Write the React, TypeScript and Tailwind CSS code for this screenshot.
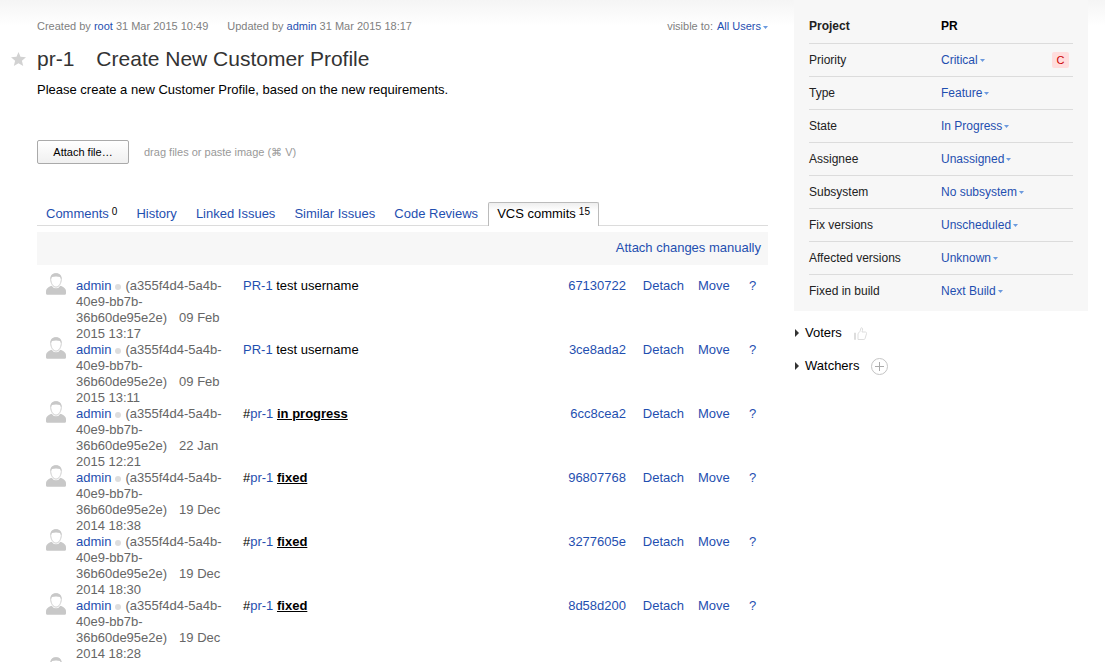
import type { ReactNode } from 'react'

type Commit = {
  date: string
  time: string
  hash: string
  message: ReactNode
}

function IssueLink({ children }: { children: ReactNode }) {
  return <a href="#" className="text-[#1f4fb0]">{children}</a>
}

const testMessage = <><IssueLink>PR-1</IssueLink> test username</>

const command = (text: string) => (
  <>#<IssueLink>pr-1</IssueLink> <b className="underline">{text}</b></>
)

const commits: Commit[] = [
  { date: '09 Feb', time: '2015 13:17', hash: '67130722', message: testMessage },
  { date: '09 Feb', time: '2015 13:11', hash: '3ce8ada2', message: testMessage },
  { date: '22 Jan', time: '2015 12:21', hash: '6cc8cea2', message: command('in progress') },
  { date: '19 Dec', time: '2014 18:38', hash: '96807768', message: command('fixed') },
  { date: '19 Dec', time: '2014 18:30', hash: '3277605e', message: command('fixed') },
  { date: '19 Dec', time: '2014 18:28', hash: '8d58d200', message: command('fixed') },
]

const tabs = [
  { label: 'Comments', count: 0 },
  { label: 'History' },
  { label: 'Linked Issues' },
  { label: 'Similar Issues' },
  { label: 'Code Reviews' },
  { label: 'VCS commits', count: 15, active: true },
]

const fields = [
  { name: 'Priority', value: 'Critical', badge: 'C' },
  { name: 'Type', value: 'Feature' },
  { name: 'State', value: 'In Progress' },
  { name: 'Assignee', value: 'Unassigned' },
  { name: 'Subsystem', value: 'No subsystem' },
  { name: 'Fix versions', value: 'Unscheduled' },
  { name: 'Affected versions', value: 'Unknown' },
  { name: 'Fixed in build', value: 'Next Build' },
]

function Dropdown({ children }: { children: ReactNode }) {
  return (
    <button type="button" className="inline-flex items-center gap-0.5 text-[#1f4fb0]">
      {children}
      <svg width="5" height="3" viewBox="0 0 5 3" fill="#6c9ade" className="mt-0.5">
        <path d="M0 0h5L2.5 3z" />
      </svg>
    </button>
  )
}

function Avatar() {
  return (
    <svg width="20" height="22" viewBox="0 0 20 22">
      <path d="M0 18.500C0 15.200 3 13.500 6 12.800h8c3 .7 6 2.400 6 5.700v1.700c0 1-.7 1.600-1.800 1.600H1.800C.7 21.800 0 21.200 0 20.200z" fill="#c8c8c8" />
      <path d="M10 .8c3.600 0 5.500 2.400 5.300 5.600C15.100 10.400 13 14.300 10 14.300S4.900 10.400 4.700 6.400C4.500 3.200 6.400.8 10 .8z" fill="#fff" stroke="#fff" strokeWidth="2" />
      <path d="M10 .8c3.600 0 5.500 2.400 5.300 5.600C15.100 10.400 13 14.100 10 14.100S4.900 10.400 4.700 6.400C4.500 3.200 6.400.8 10 .8z" fill="#fff" stroke="#c8c8c8" strokeWidth="0.9" />
      <path d="M4.700 6.200C4.100 2.500 6.200.3 10 .3s5.900 2.200 5.300 5.900c-.5-.6-.8-1.200-1.200-2.200-2.400-.7-5.800-.7-8.200 0-.4 1-.7 1.600-1.200 2.200z" fill="#c8c8c8" />
    </svg>
  )
}

function FieldsPanel() {
  return (
    <div className="bg-[#f7f7f7] px-[15px] pt-[10px] pb-1">
      <table className="w-full table-fixed border-collapse text-left text-xs">
        <tbody>
          <tr className="h-[33px] border-b border-[#dcdcdc]">
            <th scope="row" className="w-1/2 font-bold text-[#222]">Project</th>
            <td className="w-1/2 font-bold">PR</td>
          </tr>
          {fields.map((field) => (
            <tr key={field.name} className="h-[33px] border-b border-[#dcdcdc] last:border-b-0">
              <th scope="row" className="font-normal text-[#222]">{field.name}</th>
              <td>
                <div className="flex items-center justify-between pr-1">
                  <Dropdown>{field.value}</Dropdown>
                  {field.badge && (
                    <span className="w-[17px] rounded-xs bg-[#ffdddd] text-center text-[11px] leading-4 text-[#c00]">
                      {field.badge}
                    </span>
                  )}
                </div>
              </td>
            </tr>
          ))}
        </tbody>
      </table>
    </div>
  )
}

function Expander({ label }: { label: string }) {
  return (
    <button type="button" className="flex items-center gap-1.5">
      <svg width="5" height="8" viewBox="0 0 5 8" fill="#333">
        <path d="M1 0l4 4-4 4z" />
      </svg>
      {label}
    </button>
  )
}

function App() {
  return (
    <div className="h-screen overflow-hidden bg-white bg-linear-to-b from-[#f5f5f5] to-white to-[26px] font-['Liberation_Sans',Arial,sans-serif] text-[13px] leading-4 text-black">
      <div className="flex items-start gap-[26px] pr-[17px] pl-[11px]">
        <main className="min-w-0 flex-1 pt-[18px]">
          {/* Issue header */}
          <div className="flex items-center justify-between pl-[26px] text-[11px] text-[#808080]">
            <div className="flex gap-[19px]">
              <span>Created by <a href="#" className="text-[#1f4fb0]">root</a> 31 Mar 2015 10:49</span>
              <span>Updated by <a href="#" className="text-[#1f4fb0]">admin</a> 31 Mar 2015 18:17</span>
            </div>
            <div className="flex gap-1">
              visible to: <Dropdown>All Users</Dropdown>
            </div>
          </div>

          <div className="mt-[11px] flex items-center text-[21px] leading-7 text-[#333]">
            <button type="button" aria-label="Star issue" className="w-[26px]">
              <svg width="15" height="14" viewBox="0 0 15 14" fill="#d2d2d2">
                <path d="M7.500 0l2 4.700 5.500.5-4.100 3.500L12.200 14l-4.700-2.800L2.800 14l1.300-5.300L0 5.200l5.500-.5z" />
              </svg>
            </button>
            <h1 className="flex gap-[22px]">
              <span>pr-1</span>
              <span>Create New Customer Profile</span>
            </h1>
          </div>

          <div className="pl-[26px]">
            <p className="mt-[9px]">Please create a new Customer Profile, based on the new requirements.</p>

            <div className="mt-[42px] flex items-center gap-[15px] text-[11px]">
              <button type="button" className="h-6 w-[92px] rounded-xs border border-[#aaa] bg-linear-to-b from-white to-[#f0f0f0]">
                Attach file…
              </button>
              <span className="text-[#999]">drag files or paste image (⌘ V)</span>
            </div>

            {/* Tabs */}
            <nav className="mt-[38px] flex gap-px border-b border-[#dcdcdc]">
              {tabs.map((tab) => (
                <a
                  key={tab.label}
                  href="#"
                  className={
                    tab.active
                      ? '-mb-px flex h-6 gap-[3px] rounded-t-xs border border-b-0 border-[#bbb] bg-white bg-linear-to-b from-[#eee] to-white to-[8px] px-2 pt-[3px]'
                      : 'flex gap-[3px] px-[9px] pt-1 text-[#1f4fb0]'
                  }
                >
                  {tab.label}
                  {tab.count !== undefined && (
                    <span className="text-[10px] leading-3 text-black">{tab.count}</span>
                  )}
                </a>
              ))}
            </nav>

            {/* Commits */}
            <div className="mt-1.5 bg-[#f7f7f7] px-[7px] pt-2 pb-[9px] text-right">
              <a href="#" className="text-[#1f4fb0]">Attach changes manually</a>
            </div>

            <table className="mt-[13px] w-full table-fixed border-collapse">
              <colgroup>
                <col className="w-[39px]" />
                <col className="w-[167px]" />
                <col />
                <col className="w-[100px]" />
                <col className="w-[72px]" />
                <col className="w-[51px]" />
                <col className="w-[19px]" />
              </colgroup>
              <tbody>
                {commits.map((commit) => (
                  <tr key={commit.hash} className="align-top">
                    <td className="pl-[9px]">
                      <div className="-mt-[5px]"><Avatar /></div>
                    </td>
                    <td className="pr-[17px] text-[#666]">
                      <a href="#" className="text-[#1f4fb0]">admin</a>
                      <span className="mx-1 inline-block size-1.5 rounded-full bg-[#ddd]" />
                      (a355f4d4-5a4b-<wbr />40e9-bb7b-<wbr />36b60de95e2e)
                      <span className="ml-3">{commit.date}</span> {commit.time}
                    </td>
                    <td>{commit.message}</td>
                    <td className="text-right"><a href="#" className="text-[#1f4fb0]">{commit.hash}</a></td>
                    <td className="pr-[14px] text-right"><a href="#" className="text-[#1f4fb0]">Detach</a></td>
                    <td><a href="#" className="text-[#1f4fb0]">Move</a></td>
                    <td><a href="#" className="text-[#1f4fb0]">?</a></td>
                  </tr>
                ))}
                <tr className="align-top">
                  <td className="pl-[9px]">
                    <div className="-mt-[5px]"><Avatar /></div>
                  </td>
                </tr>
              </tbody>
            </table>
          </div>
        </main>

        <aside className="w-[294px] shrink-0">
          <FieldsPanel />
          <div className="mt-[14px] flex h-4 items-center gap-3">
            <Expander label="Voters" />
            <button type="button" aria-label="Vote">
              <svg width="13" height="13" viewBox="0 0 13 13" fill="none" stroke="#ddd">
                <path d="M.5 6v6.500h1V6zM4 6.500c1.500-1 2.500-2.500 2.800-5C7 .300 8.500.5 8.600 2c0 1-.2 2-.6 3h3.500c1 0 1.200 1 .9 2l-1.300 4.500c-.2.7-.6 1-1.200 1H4z" />
              </svg>
            </button>
          </div>
          <div className="mt-[17px] flex h-4 items-center gap-3">
            <Expander label="Watchers" />
            <button type="button" aria-label="Add watcher">
              <svg width="17" height="17" viewBox="0 0 17 17" fill="none" stroke="#c4c4c4">
                <circle cx="8.5" cy="8.5" r="8" />
                <path d="M4 8.500h9M8.500 4v9" stroke="#aaa" />
              </svg>
            </button>
          </div>
        </aside>
      </div>
    </div>
  )
}

export default App
